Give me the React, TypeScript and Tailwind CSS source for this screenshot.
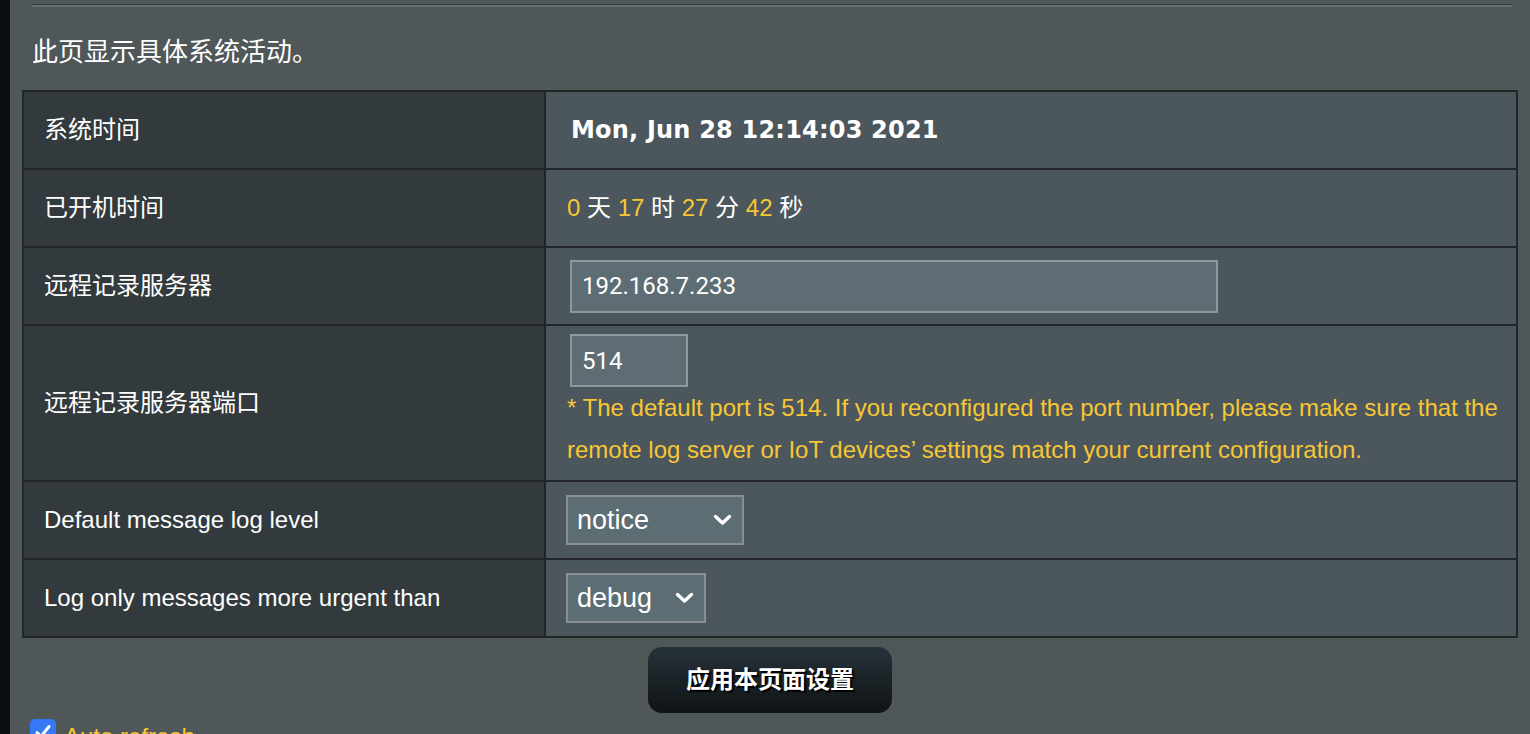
import React from 'react';

const sans = "font-['Liberation_Sans','Noto_Sans_CJK_SC',sans-serif]";

type RowProps = {
	label: string;
	children: React.ReactNode;
	first?: boolean;
	tall?: boolean;
};

const Row = (props: RowProps) => {
	const { label, children, first, tall } = props;
	const height = first ? 'h-[76px]' : tall ? 'h-[156px] border-t-2' : 'h-[78px] border-t-2';

	return (
		<div className={`flex ${height} border-[#222628]`}>
			<div className="w-[522px] shrink-0 flex items-center pl-[20px] bg-[#323a3d] border-r-2 border-[#222628] text-[24px] text-white">
				{label}
			</div>
			<div className="flex-1 flex items-center pl-[21px] pr-[18px] bg-[#4b575d] text-white">
				{children}
			</div>
		</div>
	);
};

const Chevron = () => (
	<svg width="19" height="12" viewBox="0 0 19 12" fill="none">
		<path d="M2.5 2.5 L9.5 9 L16.5 2.5" stroke="white" strokeWidth="3.4" strokeLinecap="round" strokeLinejoin="round" />
	</svg>
);

const FakeSelect = ({ value, width }: { value: string; width: string }) => (
	<div className={`${width} h-[50px] -ml-[1px] flex items-center justify-between pl-[9px] pr-[10px] bg-[#5d6d74] border-2 border-[#8a8e90] text-[27px] text-white`}>
		<span>{value}</span>
		<Chevron />
	</div>
);

const Num = ({ children }: { children: React.ReactNode }) => (
	<span className="text-[#f8c733]">{children}</span>
);

export default function App() {
	return (
		<div className={`w-[1530px] h-[734px] overflow-hidden flex ${sans}`}>
			<div className="w-[10px] shrink-0 bg-[#0b0f12]" />
			<div className="flex-1 flex flex-col bg-[#4f5759]">
				<div className="mt-[4px] ml-[22px] mr-[18px]">
					<div className="h-[1px] bg-[#353b3d]" />
					<div className="h-[2px] bg-[#66747a]" />
				</div>

				<div className="mt-[27px] ml-[22px] h-[36px] flex items-center text-[26px] text-white">
					此页显示具体系统活动。
				</div>

				<div className="mt-[20px] ml-[12px] w-[1496px] border-2 border-[#222628]">
					<Row label="系统时间" first>
						<span className="ml-[4px] font-['DejaVu_Sans',sans-serif] font-bold text-[24px] tracking-[0.2px]">
							Mon, Jun 28 12:14:03 2021
						</span>
					</Row>
					<Row label="已开机时间">
						<span className="text-[24px]">
							<Num>0</Num> 天 <Num>17</Num> 时 <Num>27</Num> 分 <Num>42</Num> 秒
						</span>
					</Row>
					<Row label="远程记录服务器">
						<div className="ml-[3px] w-[648px] h-[53px] flex items-center pl-[10px] bg-[#5e6d74] border-2 border-[#8c9a9e] font-['Roboto',sans-serif] text-[24px]">
							192.168.7.233
						</div>
					</Row>
					<Row label="远程记录服务器端口" tall>
						<div className="self-stretch flex flex-col pt-[8px]">
							<div className="ml-[3px] w-[118px] h-[53px] flex items-center pl-[10px] bg-[#5e6d74] border-2 border-[#8c9a9e] font-['Roboto',sans-serif] text-[24px]">
								514
							</div>
							<p className="text-[24px] leading-[42px] text-[#f8c733]">
								* The default port is 514. If you reconfigured the port number, please make sure that the remote log server or IoT devices’ settings match your current configuration.
							</p>
						</div>
					</Row>
					<Row label="Default message log level">
						<FakeSelect value="notice" width="w-[178px]" />
					</Row>
					<Row label="Log only messages more urgent than">
						<FakeSelect value="debug" width="w-[140px]" />
					</Row>
				</div>

				<div className="w-[1520px] flex justify-center mt-[9px]">
					<button className="w-[244px] h-[66px] rounded-[14px] bg-gradient-to-b from-[#26323a] to-[#101314] text-white text-[24px] font-bold [text-shadow:2px_2px_1px_#000]">
						应用本页面设置
					</button>
				</div>

				<div className="mt-[6px] ml-[20px] flex items-start gap-[8px]">
					<div className="w-[26px] h-[26px] rounded-[5px] bg-[#3478f6] flex items-center justify-center">
						<svg width="18" height="18" viewBox="0 0 18 18" fill="none">
							<path d="M3 9.5 L7 13.5 L15 3.5" stroke="white" strokeWidth="3" strokeLinecap="round" strokeLinejoin="round" />
						</svg>
					</div>
					<span className="mt-[4px] text-[24px] leading-[28px] text-[#f8c733]">Auto refresh</span>
				</div>
			</div>
		</div>
	);
}
